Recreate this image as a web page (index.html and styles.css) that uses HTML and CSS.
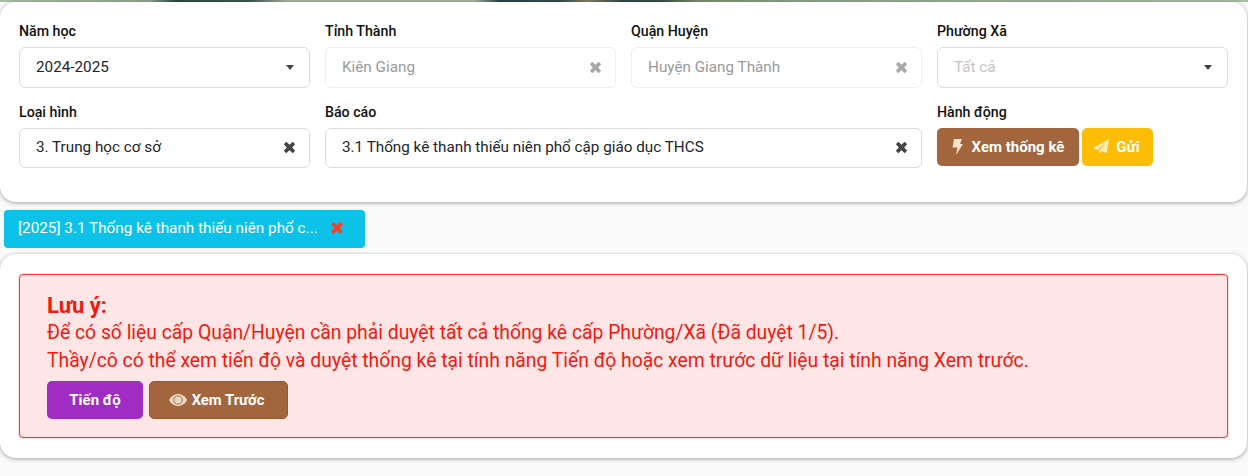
FILE: index.html
```html
<!DOCTYPE html>
<html lang="en">
<head>
    <meta charset="UTF-8">
    <title>Thống kê</title>
    <link rel="stylesheet" href="styles.css">
</head>
<body>
    <div class="banner"></div>
    <div class="card filter-card">
        <div class="filter-grid">
            <div class="field">
                <label>Năm học</label>
                <div class="select tall"><span>2024-2025</span><i class="caret"></i></div>
            </div>
            <div class="field">
                <label>Tỉnh Thành</label>
                <div class="select tall disabled"><span>Kiên Giang</span>
                    <svg class="clear" viewBox="0 0 12 12"><path d="M0.800 3 3 0.800 6 3.500 9 0.800 11.200 3 8.500 6 11.200 9 9 11.200 6 8.500 3 11.200 0.800 9 3.500 6Z"/></svg>
                </div>
            </div>
            <div class="field">
                <label>Quận Huyện</label>
                <div class="select tall disabled"><span>Huyện Giang Thành</span>
                    <svg class="clear" viewBox="0 0 12 12"><path d="M0.800 3 3 0.800 6 3.500 9 0.800 11.200 3 8.500 6 11.200 9 9 11.200 6 8.500 3 11.200 0.800 9 3.500 6Z"/></svg>
                </div>
            </div>
            <div class="field">
                <label>Phường Xã</label>
                <div class="select tall"><span class="placeholder">Tất cả</span><i class="caret"></i></div>
            </div>
            <div class="field">
                <label>Loại hình</label>
                <div class="select"><span>3. Trung học cơ sở</span>
                    <svg class="clear" viewBox="0 0 12 12"><path d="M0.800 3 3 0.800 6 3.500 9 0.800 11.200 3 8.500 6 11.200 9 9 11.200 6 8.500 3 11.200 0.800 9 3.500 6Z"/></svg>
                </div>
            </div>
            <div class="field span-2">
                <label>Báo cáo</label>
                <div class="select"><span>3.1 Thống kê thanh thiếu niên phổ cập giáo dục THCS</span>
                    <svg class="clear" viewBox="0 0 12 12"><path d="M0.800 3 3 0.800 6 3.500 9 0.800 11.200 3 8.500 6 11.200 9 9 11.200 6 8.500 3 11.200 0.800 9 3.500 6Z"/></svg>
                </div>
            </div>
            <div class="field">
                <label>Hành động</label>
                <div class="actions">
                    <button class="btn btn-brown">
                        <svg class="icon bolt" viewBox="0 0 11 16"><path d="M2 0H10L8 5H11L4 16 5.500 8.500H0.500Z"/></svg>
                        Xem thống kê
                    </button>
                    <button class="btn btn-yellow">
                        <svg class="icon plane" viewBox="0 0 16 16"><path d="M16 0 13.600 14 8.600 11.900 6.200 15V12L13.400 3 4.600 10.900 0 9Z"/></svg>
                        Gửi
                    </button>
                </div>
            </div>
        </div>
    </div>

    <div class="tabs">
        <div class="tab">
            <span>[2025] 3.1 Thống kê thanh thiếu niên phổ c...</span>
            <svg class="tab-close" viewBox="0 0 12 12"><path d="M0.800 3 3 0.800 6 3.500 9 0.800 11.200 3 8.500 6 11.200 9 9 11.200 6 8.500 3 11.200 0.800 9 3.500 6Z"/></svg>
        </div>
    </div>

    <div class="card result-card">
        <div class="alert">
            <h3>Lưu ý:</h3>
            <p>Để có số liệu cấp Quận/Huyện cần phải duyệt tất cả thống kê cấp Phường/Xã (Đã duyệt 1/5).</p>
            <p>Thầy/cô có thể xem tiến độ và duyệt thống kê tại tính năng Tiến độ hoặc xem trước dữ liệu tại tính năng Xem trước.</p>
            <div class="alert-actions">
                <button class="btn btn-purple">Tiến độ</button>
                <button class="btn btn-brown btn-outline">
                    <svg class="icon eye" viewBox="0 0 18 12">
                        <path d="M9 0C13 0 16.400 2.500 18 6 16.400 9.500 13 12 9 12 5 12 1.600 9.500 0 6 1.600 2.500 5 0 9 0Z"/>
                        <circle class="eye-ring" cx="9" cy="6" r="4.200"/>
                    </svg>
                    Xem Trước
                </button>
            </div>
        </div>
    </div>
</body>
</html>
```

FILE: styles.css
```css
* {
    box-sizing: border-box;
}
body {
    margin: 0;
    padding-bottom: 18px;
    background-color: #fafafa;
    font-family: 'Roboto', sans-serif;
    font-size: 14px;
    color: #212529;
}
.banner {
    height: 2px;
    background: linear-gradient(90deg, #a9bda6, #8fa58e 12%, #2f4a44 14%, #3f5a50 20%, #a8b5a0 23%, #a8b5a0 38%, #2c4650 40%, #33504e 45%, #8a7f62 47%, #2f4a50 50%, #3a5048 53%, #7f8f70 56%, #8fa58e 66%, #a9bda6 100%);
}
.card {
    background-color: white;
    border-radius: 16px;
    box-shadow: 0 1px 4px rgba(0, 0, 0, 0.35);
    margin-right: 1px;
    padding: 20px 19px;
}
.filter-card {
    height: 200px;
    padding-top: 21px;
}
.filter-grid {
    display: grid;
    grid-template-columns: repeat(4, 1fr);
    column-gap: 15px;
    row-gap: 16px;
}
.span-2 {
    grid-column: span 2;
}
.field label {
    display: block;
    font-size: 14.2px;
    font-weight: 500;
    line-height: 16px;
    margin-bottom: 8px;
    color: #111;
}
.select {
    height: 40px;
    display: flex;
    align-items: center;
    justify-content: space-between;
    padding: 0 13px 2px 16px;
    border: 1px solid #dcdcdc;
    border-radius: 6px;
    font-size: 15.25px;
}
.select.tall {
    height: 41px;
}
.select.disabled {
    border-color: #efefef;
    color: #9a9a9a;
}
.placeholder {
    color: #c4c4c4;
}
.caret {
    width: 0;
    height: 0;
    border-left: 4px solid transparent;
    border-right: 4px solid transparent;
    border-top: 5px solid #444;
    margin: 2px 2px 0 0;
}
.clear {
    width: 13px;
    height: 13px;
    margin-top: 1px;
    fill: #444;
}
.disabled .clear {
    fill: #a8a8a8;
}
.actions {
    display: flex;
    gap: 3px;
}
.btn {
    height: 38px;
    display: inline-flex;
    align-items: center;
    justify-content: center;
    border: none;
    border-radius: 5px;
    color: white;
    font-family: 'Roboto', sans-serif;
    font-size: 15px;
    font-weight: 700;
}
.btn-brown {
    background-color: #a3653e;
    width: 142px;
}
.btn-yellow {
    background-color: #fdbd07;
    width: 71px;
    padding: 0 8px 0 6px;
}
.btn-purple {
    background-color: #a02cc3;
    width: 96px;
}
.btn-outline {
    border: 1px solid #96592f;
    width: 139px;
    padding: 0 4px 0 0;
    font-size: 14.8px;
}
.icon {
    fill: #f6e3c9;
    flex-shrink: 0;
}
.bolt {
    width: 11px;
    height: 16px;
    margin-right: 9px;
}
.plane {
    width: 16px;
    height: 16px;
    margin-right: 7px;
    fill: #fdeebd;
}
.eye {
    width: 18px;
    height: 12px;
    margin-right: 5px;
    fill: #ead7c3;
}
.eye-ring {
    fill: none;
    stroke: #a3653e;
    stroke-width: 0.9;
}
.tabs {
    padding: 8px 0 6px 4px;
}
.tab {
    width: 361px;
    height: 38px;
    display: flex;
    align-items: center;
    padding: 0 0 2px 14px;
    background-color: #0dc2e8;
    border-radius: 4px;
    color: white;
    font-size: 15.3px;
}
.tab-close {
    width: 14px;
    height: 14px;
    margin-left: 12px;
    fill: #f0442c;
}
.result-card {
    height: 204px;
}
.alert {
    height: 164px;
    padding: 19px 27px;
    background-color: #ffe6e6;
    border: 1px solid #f23b32;
    border-radius: 4px;
    box-shadow: 0 0 0 1px rgba(255, 90, 90, 0.2);
    color: #f01a10;
    font-size: 19.32px;
}
.alert h3 {
    margin: 0 0 1px;
    font-size: 22px;
    font-weight: 700;
    line-height: 24px;
}
.alert p {
    margin: 0;
    line-height: 27.5px;
}
.alert-actions {
    display: flex;
    gap: 6px;
    margin-top: 7px;
}
```
